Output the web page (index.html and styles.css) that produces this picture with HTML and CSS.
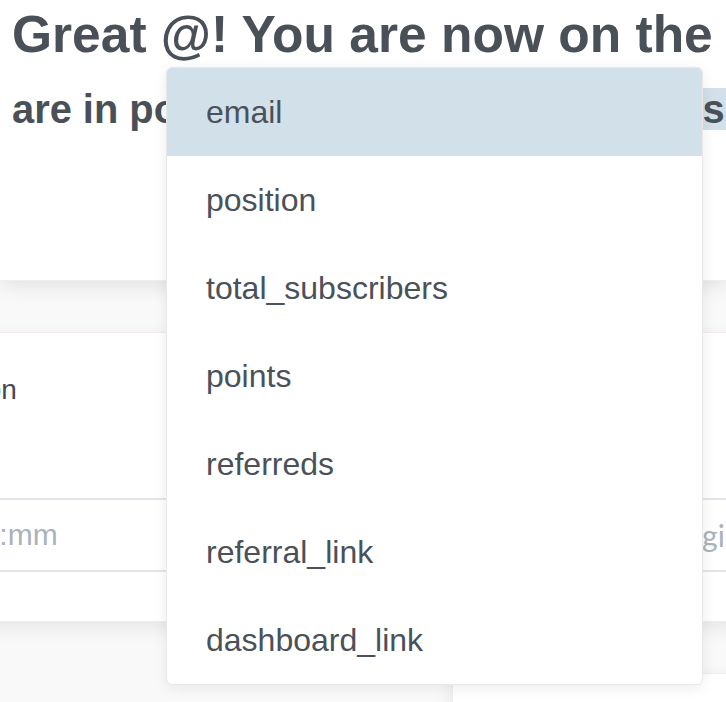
FILE: index.html
```html
<!DOCTYPE html>
<html lang="en">
<head>
<meta charset="utf-8">
<title>Waitlist message editor</title>
<link rel="stylesheet" href="styles.css">
</head>
<body>
  <header class="hero">
    <h1 class="hero-title">Great @! You are now on the</h1>
    <p class="hero-sub">are in position @ out of @ people in <span class="sel">subscribers list</span></p>
  </header>

  <main class="board">
    <section class="card">
      <label class="field-label">Duration</label>
      <input class="field-input" type="text" placeholder="HH:mm">
    </section>
    <section class="card">
      <label class="field-label">Region</label>
      <input class="field-input field-input--lato" type="text" placeholder="Choose a region">
    </section>
    <section class="card card--second">
      <label class="field-label">Message</label>
    </section>
  </main>

  <ul class="mention-menu">
    <li class="mention-item is-active">email</li>
    <li class="mention-item">position</li>
    <li class="mention-item">total_subscribers</li>
    <li class="mention-item">points</li>
    <li class="mention-item">referreds</li>
    <li class="mention-item">referral_link</li>
    <li class="mention-item">dashboard_link</li>
  </ul>
</body>
</html>
```

FILE: styles.css
```css
html, body {
  margin: 0;
  padding: 0;
}

body {
  background: #f9f9f9;
  font-family: "Liberation Sans", Arial, sans-serif;
  color: #4a5058;
  overflow: hidden;
  position: relative;
  min-height: 702px;
}

.hero {
  background: #ffffff;
  height: 280px;
  border-bottom: 1px solid #f4eded;
  box-shadow: 0 6px 18px rgba(0, 0, 0, 0.09);
  padding-left: 12px;
  position: relative;
  z-index: 1;
}

.hero-title {
  margin: 0;
  padding-top: 5px;
  font-size: 51.5px;
  line-height: 58px;
  font-weight: 700;
  white-space: nowrap;
  color: #4a5058;
}

.hero-sub {
  margin: 22px 0 0;
  font-size: 39.85px;
  line-height: 48px;
  font-weight: 700;
  white-space: nowrap;
  color: #4a5058;
}

.sel {
  display: inline-block;
  background: #d3e0e9;
  line-height: 36px;
  padding: 3px 0;
}

.board {
  display: grid;
  grid-template-columns: 562px 600px;
  gap: 51px 20px;
  margin-left: -130px;
  padding-top: 51px;
  width: 1200px;
}

.card {
  background: #ffffff;
  border: 1px solid #f3ecec;
  box-shadow: 0 6px 18px rgba(0, 0, 0, 0.08);
  height: 290px;
  box-sizing: border-box;
  padding: 41px 40px 0;
  display: flex;
  flex-direction: column;
}

.card--second {
  grid-column: 2;
}

.field-label {
  font-size: 28px;
  line-height: 32px;
  color: #454a51;
}

.field-input {
  margin-top: 92px;
  height: 74px;
  box-sizing: border-box;
  border: none;
  border-top: 2px solid #e1e5ea;
  border-bottom: 2px solid #e1e5ea;
  background: transparent;
  padding: 0 0 0 45px;
  font-family: "Liberation Sans", Arial, sans-serif;
  font-size: 30px;
  color: #4a5058;
  width: 100%;
  outline: none;
}

.field-input::placeholder {
  color: #aab3bc;
}

.field-input--lato {
  font-family: Lato, "Liberation Sans", sans-serif;
  padding-left: 53px;
}

.mention-menu {
  position: absolute;
  left: 166px;
  top: 67px;
  width: 537px;
  margin: 0;
  padding: 0;
  list-style: none;
  background: #ffffff;
  border: 1px solid #e8e8e8;
  border-radius: 6px;
  box-shadow: 0 3px 14px rgba(0, 0, 0, 0.08);
  overflow: hidden;
  box-sizing: border-box;
  z-index: 5;
}

.mention-item {
  height: 88px;
  line-height: 88px;
  padding-left: 39px;
  font-size: 32px;
  color: #4b5159;
  white-space: nowrap;
}

.mention-item.is-active {
  background: #d2e0e9;
}
```
